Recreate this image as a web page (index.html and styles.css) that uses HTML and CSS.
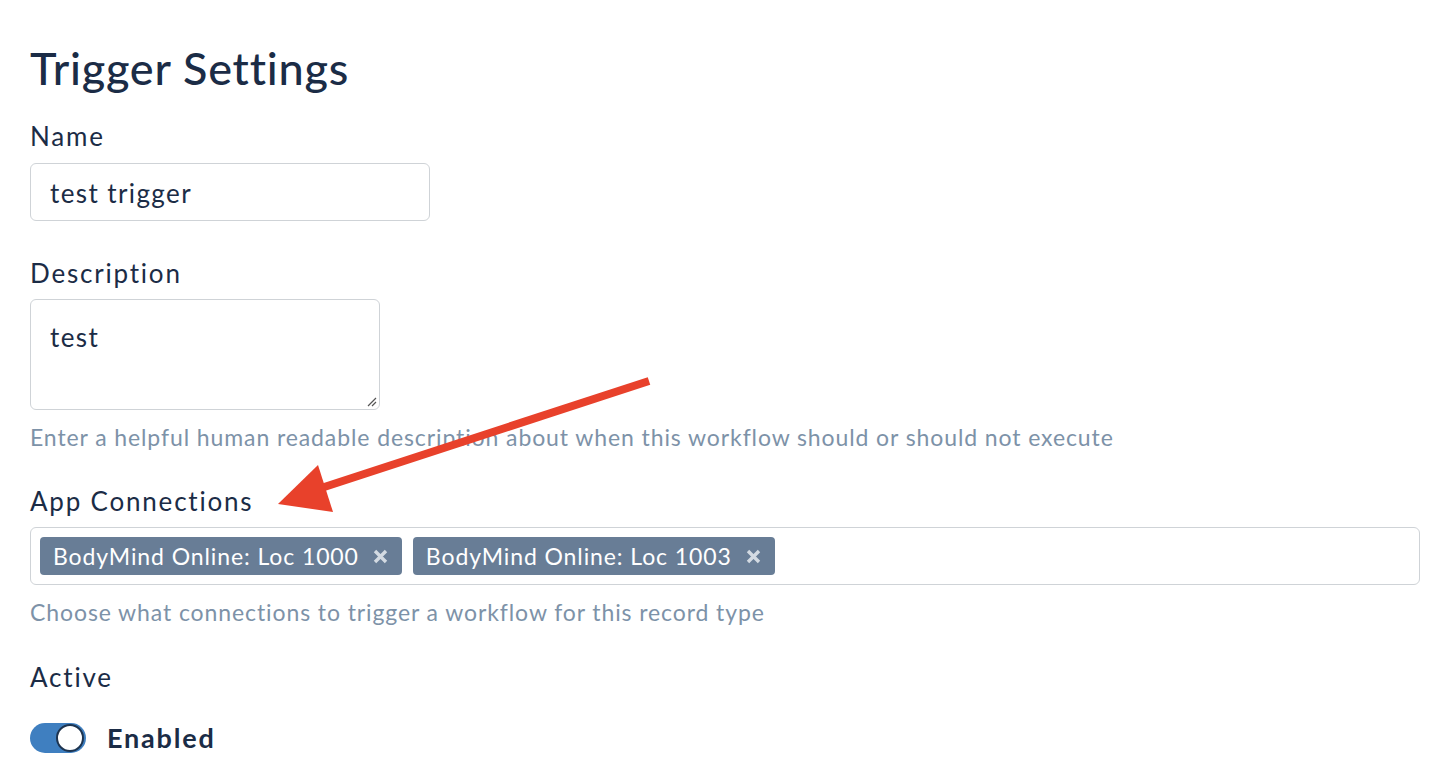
FILE: index.html
```html
<!DOCTYPE html>
<html>
<head>
<meta charset="utf-8">
<link rel="stylesheet" href="styles.css">
</head>
<body>
<div class="page">
  <h1 class="title">Trigger Settings</h1>

  <div class="field field-name">
    <label class="label">Name</label>
    <div class="input">test trigger</div>
  </div>

  <div class="field field-desc">
    <label class="label">Description</label>
    <div class="textarea">test
      <svg class="grip" width="12" height="12" viewBox="0 0 12 12"><path d="M11 3 L3 11 M11 7 L7 11" stroke="#555" stroke-width="1.2" fill="none"/></svg>
    </div>
    <div class="help">Enter a helpful human readable description about when this workflow should or should not execute</div>
  </div>

  <div class="field field-conn">
    <label class="label">App Connections</label>
    <div class="multi">
      <span class="tag">BodyMind Online: Loc 1000<svg class="x" width="15" height="15" viewBox="0 0 15 15"><path d="M2 2 L13 13 M13 2 L2 13" stroke="#d3dae2" stroke-width="3.4" fill="none"/></svg></span>
      <span class="tag">BodyMind Online: Loc 1003<svg class="x" width="15" height="15" viewBox="0 0 15 15"><path d="M2 2 L13 13 M13 2 L2 13" stroke="#d3dae2" stroke-width="3.4" fill="none"/></svg></span>
    </div>
    <div class="help">Choose what connections to trigger a workflow for this record type</div>
  </div>

  <div class="field field-active">
    <label class="label">Active</label>
    <div class="toggle-row">
      <span class="toggle"><span class="knob"></span></span>
      <span class="toggle-text">Enabled</span>
    </div>
  </div>

  <svg class="arrow" width="1450" height="778" viewBox="0 0 1450 778">
    <line x1="649" y1="381" x2="312" y2="491" stroke="#e8412b" stroke-width="8" stroke-linecap="butt"/>
    <polygon points="278,504 318,465 333,512" fill="#e8412b"/>
  </svg>
</div>
</body>
</html>
```

FILE: styles.css
```css
html, body {
  margin: 0;
  padding: 0;
  background: #ffffff;
}
body {
  font-family: "Lato", "Liberation Sans", sans-serif;
  color: #1b2c46;
}
.page {
  position: relative;
  width: 1450px;
  height: 778px;
  padding: 0 30px;
  box-sizing: border-box;
  overflow: hidden;
}
.title {
  margin: 0;
  padding-top: 40px;
  font-size: 45px;
  font-weight: 500;
  line-height: 56px;
  letter-spacing: 0.8px;
}
.field {
  display: flex;
  flex-direction: column;
  align-items: flex-start;
}
.label {
  font-size: 26px;
  line-height: 30px;
  font-weight: 400;
  letter-spacing: 1.8px;
}
.field-name { margin-top: 25px; }
.field-name .label { margin-bottom: 12px; }
.input {
  width: 400px;
  height: 58px;
  box-sizing: border-box;
  border: 1.5px solid #cfd3d7;
  border-radius: 6px;
  padding: 3px 19px 0;
  font-size: 26px;
  letter-spacing: 1.4px;
  line-height: 52px;
}
.field-desc { margin-top: 37px; }
.field-desc .label { margin-bottom: 11px; }
.textarea {
  position: relative;
  width: 350px;
  height: 111px;
  box-sizing: border-box;
  border: 1.5px solid #cfd3d7;
  border-radius: 6px;
  padding: 22px 19px;
  font-size: 26px;
  letter-spacing: 1.4px;
  line-height: 30px;
}
.grip {
  position: absolute;
  right: 2px;
  bottom: 2px;
}
.help {
  font-size: 23px;
  line-height: 28px;
  letter-spacing: 0.9px;
  color: #7d92a8;
  margin-top: 13px;
}
.field-conn { margin-top: 35px; }
.field-conn .label { margin-bottom: 11px; }
.multi {
  width: 1390px;
  height: 58px;
  box-sizing: border-box;
  border: 1.5px solid #cfd3d7;
  border-radius: 6px;
  padding: 0 9px;
  display: flex;
  align-items: center;
  gap: 11px;
}
.tag {
  display: inline-flex;
  align-items: center;
  height: 38px;
  padding: 0 14px 0 13px;
  background: #687d96;
  border-radius: 4px;
  color: #ffffff;
  font-size: 23px;
  letter-spacing: 0.9px;
}
.tag .x {
  margin-left: 14px;
}
.field-active { margin-top: 36px; }
.field-active .label { margin-bottom: 29px; }
.toggle-row {
  display: flex;
  align-items: center;
  gap: 21px;
}
.toggle {
  position: relative;
  width: 56px;
  height: 30px;
  border-radius: 15px;
  background: #3f7fc0;
  display: inline-block;
}
.knob {
  position: absolute;
  right: 2px;
  top: 1px;
  width: 24px;
  height: 24px;
  border-radius: 50%;
  background: #fff;
  border: 2px solid #1d3450;
}
.toggle-text {
  font-size: 27px;
  font-weight: 700;
  letter-spacing: 1.8px;
}
.arrow {
  position: absolute;
  left: 0;
  top: 0;
  pointer-events: none;
}
```
